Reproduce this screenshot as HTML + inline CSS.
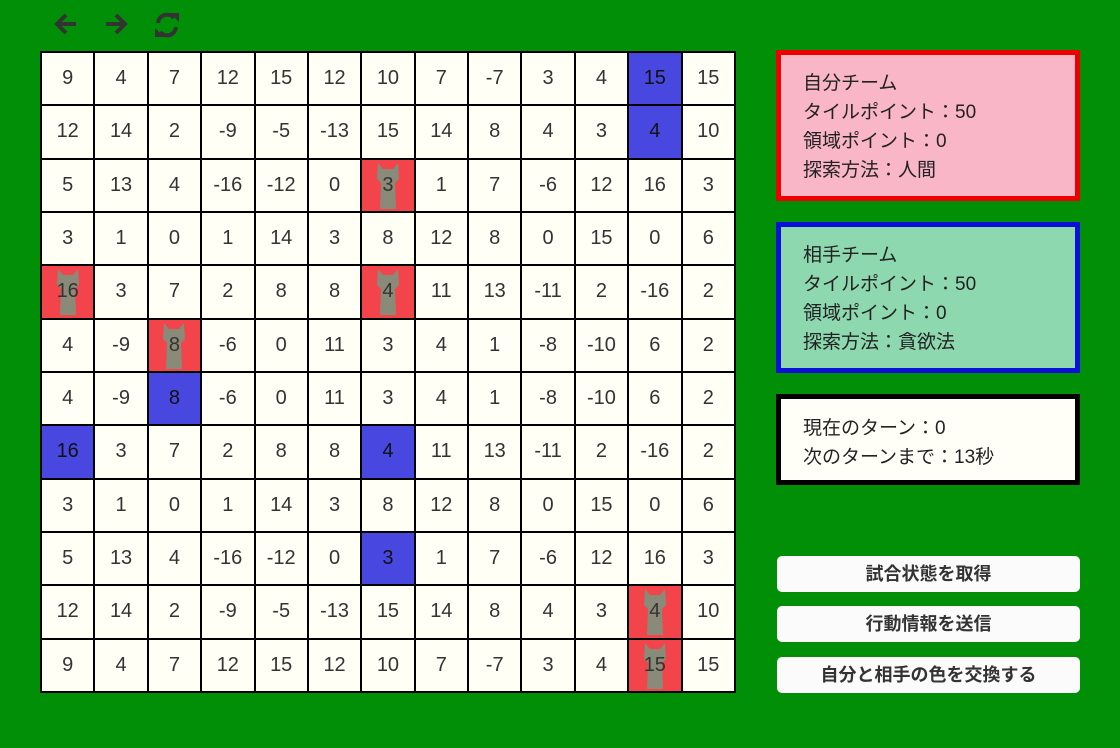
<!DOCTYPE html>
<html><head><meta charset="utf-8"><style>
html,body{margin:0;padding:0}
body{width:1120px;height:748px;background:#028f08;position:relative;overflow:hidden;font-family:"Liberation Sans","Noto Sans CJK JP",sans-serif;color:#222}
table{position:absolute;left:40px;top:51px;width:696px;height:642px;border-collapse:collapse;table-layout:fixed}
td{border:2px solid #000;background:#fffff6;text-align:center;font-size:20px;padding:0;position:relative;color:#333}
td.r{background:#f2444a}
td.b{background:#4848e0;color:#111}
td.r span{position:relative;z-index:1}
td.r svg{position:absolute;left:50%;top:1px;margin-left:-16px}
.panel{position:absolute;left:776px;width:294px;box-sizing:border-box;border:5px solid;padding:14px 0 0 22px;font-size:19px;line-height:29px;color:#222}
.btn{position:absolute;left:777px;width:303px;height:36px;background:#fbfbfb;border-radius:5px;text-align:center;font-size:18px;line-height:36px;color:#333;font-weight:bold}
.ic{position:absolute;top:10px}
</style></head><body>
<svg class="ic" style="left:52px" width="28" height="28" viewBox="0 0 28 28"><path d="M24 14H6M14 5L5 14L14 23" stroke="#333" stroke-width="4" fill="none"/></svg>
<svg class="ic" style="left:102px" width="28" height="28" viewBox="0 0 28 28"><path d="M4 14H22M14 5L23 14L14 23" stroke="#333" stroke-width="4" fill="none"/></svg>
<svg class="ic" style="left:152px" width="30" height="30" viewBox="0 0 30 30"><path d="M6 13A9 9 0 0 1 22 8M24 17A9 9 0 0 1 8 22" stroke="#333" stroke-width="4" fill="none"/><path d="M18 3L27 3L27 12Z M12 27L3 27L3 18Z" fill="#333"/></svg>
<table>
<tr><td>9</td><td>4</td><td>7</td><td>12</td><td>15</td><td>12</td><td>10</td><td>7</td><td>-7</td><td>3</td><td>4</td><td class="b">15</td><td>15</td></tr>
<tr><td>12</td><td>14</td><td>2</td><td>-9</td><td>-5</td><td>-13</td><td>15</td><td>14</td><td>8</td><td>4</td><td>3</td><td class="b">4</td><td>10</td></tr>
<tr><td>5</td><td>13</td><td>4</td><td>-16</td><td>-12</td><td>0</td><td class="r"><svg width="32" height="50" viewBox="0 0 32 50"><path d="M6 2L11 8H21L26 2L27 18L23 22L24 48H8L9 22L5 18Z" fill="#8a8a78"/></svg><span>3</span></td><td>1</td><td>7</td><td>-6</td><td>12</td><td>16</td><td>3</td></tr>
<tr><td>3</td><td>1</td><td>0</td><td>1</td><td>14</td><td>3</td><td>8</td><td>12</td><td>8</td><td>0</td><td>15</td><td>0</td><td>6</td></tr>
<tr><td class="r"><svg width="32" height="50" viewBox="0 0 32 50"><path d="M6 2L11 8H21L26 2L27 18L23 22L24 48H8L9 22L5 18Z" fill="#8a8a78"/></svg><span>16</span></td><td>3</td><td>7</td><td>2</td><td>8</td><td>8</td><td class="r"><svg width="32" height="50" viewBox="0 0 32 50"><path d="M6 2L11 8H21L26 2L27 18L23 22L24 48H8L9 22L5 18Z" fill="#8a8a78"/></svg><span>4</span></td><td>11</td><td>13</td><td>-11</td><td>2</td><td>-16</td><td>2</td></tr>
<tr><td>4</td><td>-9</td><td class="r"><svg width="32" height="50" viewBox="0 0 32 50"><path d="M6 2L11 8H21L26 2L27 18L23 22L24 48H8L9 22L5 18Z" fill="#8a8a78"/></svg><span>8</span></td><td>-6</td><td>0</td><td>11</td><td>3</td><td>4</td><td>1</td><td>-8</td><td>-10</td><td>6</td><td>2</td></tr>
<tr><td>4</td><td>-9</td><td class="b">8</td><td>-6</td><td>0</td><td>11</td><td>3</td><td>4</td><td>1</td><td>-8</td><td>-10</td><td>6</td><td>2</td></tr>
<tr><td class="b">16</td><td>3</td><td>7</td><td>2</td><td>8</td><td>8</td><td class="b">4</td><td>11</td><td>13</td><td>-11</td><td>2</td><td>-16</td><td>2</td></tr>
<tr><td>3</td><td>1</td><td>0</td><td>1</td><td>14</td><td>3</td><td>8</td><td>12</td><td>8</td><td>0</td><td>15</td><td>0</td><td>6</td></tr>
<tr><td>5</td><td>13</td><td>4</td><td>-16</td><td>-12</td><td>0</td><td class="b">3</td><td>1</td><td>7</td><td>-6</td><td>12</td><td>16</td><td>3</td></tr>
<tr><td>12</td><td>14</td><td>2</td><td>-9</td><td>-5</td><td>-13</td><td>15</td><td>14</td><td>8</td><td>4</td><td>3</td><td class="r"><svg width="32" height="50" viewBox="0 0 32 50"><path d="M6 2L11 8H21L26 2L27 18L23 22L24 48H8L9 22L5 18Z" fill="#8a8a78"/></svg><span>4</span></td><td>10</td></tr>
<tr><td>9</td><td>4</td><td>7</td><td>12</td><td>15</td><td>12</td><td>10</td><td>7</td><td>-7</td><td>3</td><td>4</td><td class="r"><svg width="32" height="50" viewBox="0 0 32 50"><path d="M6 2L11 8H21L26 2L27 18L23 22L24 48H8L9 22L5 18Z" fill="#8a8a78"/></svg><span>15</span></td><td>15</td></tr>
</table>
<div class="panel" style="top:50px;height:151px;width:304px;border-color:#ee0000;background:#f8b6c6">自分チーム<br>タイルポイント：50<br>領域ポイント：0<br>探索方法：人間</div>
<div class="panel" style="top:222px;height:151px;width:304px;border-color:#0a10d8;background:#8ed8b0">相手チーム<br>タイルポイント：50<br>領域ポイント：0<br>探索方法：貪欲法</div>
<div class="panel" style="top:394px;height:91px;width:304px;border-color:#000;background:#fffff8;padding-top:15px">現在のターン：0<br>次のターンまで：13秒</div>
<div class="btn" style="top:556px">試合状態を取得</div>
<div class="btn" style="top:606px">行動情報を送信</div>
<div class="btn" style="top:657px">自分と相手の色を交換する</div>
</body></html>
